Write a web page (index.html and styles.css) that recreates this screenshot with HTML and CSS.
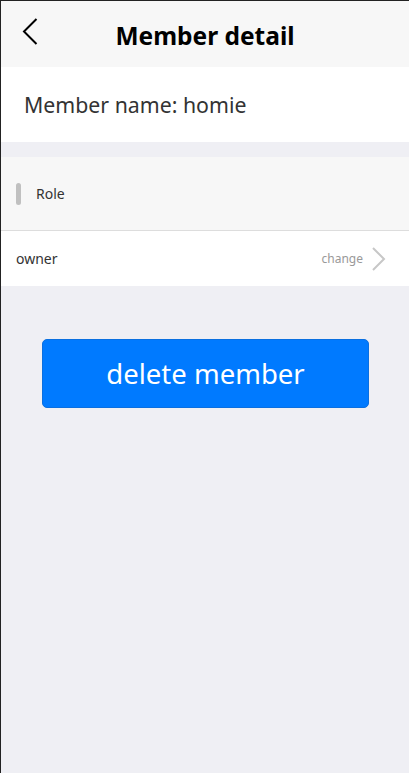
FILE: index.html
```html
<!DOCTYPE html>
<html lang="en">
<head>
<meta charset="utf-8">
<title>Member detail</title>
<link rel="stylesheet" href="styles.css">
</head>
<body>
<div class="page">
  <header class="nav">
    <button class="back" aria-label="Back">
      <svg width="16" height="27" viewBox="0 0 16 27"><path d="M14.5 1 L2 13.5 L14.5 26" fill="none" stroke="#000" stroke-width="2"/></svg>
    </button>
    <h1 class="title">Member detail</h1>
  </header>
  <section class="name-row">Member name: homie</section>
  <section class="group">
    <div class="group-head"><span class="bar"></span><span class="group-title">Role</span></div>
    <div class="item">
      <span class="item-label">owner</span>
      <span class="item-action">change
        <svg width="16" height="24" viewBox="0 0 16 24"><path d="M2 1 L13 12 L2 23" fill="none" stroke="#c7c7c7" stroke-width="2"/></svg>
      </span>
    </div>
  </section>
  <div class="actions">
    <button class="danger">delete member</button>
  </div>
</div>
</body>
</html>
```
FILE: styles.css
```css
* { box-sizing: border-box; }
html, body { margin: 0; padding: 0; height: 100%; }
body {
  font-family: "Noto Sans", "Open Sans", sans-serif;
  background: #efeff4;
  border-top: 1px solid #222;
  border-left: 1px solid #222;
}
.page { min-height: 100%; background: #efeff4; }
.nav {
  height: 66px;
  background: #f7f7f7;
  display: flex;
  align-items: center;
  justify-content: center;
  position: relative;
}
.back {
  position: absolute;
  left: 21px;
  top: 17px;
  border: 0;
  background: none;
  padding: 0;
  display: flex;
}
.title {
  margin: 0;
  font-size: 24.5px;
  font-weight: 700;
  color: #000;
  padding-top: 2px;
}
.name-row {
  height: 75px;
  background: #fff;
  display: flex;
  align-items: center;
  padding-left: 23px;
  font-size: 21.3px;
  color: #333;
  margin-bottom: 15px;
}
.group { background: #fff; }
.group-head {
  height: 74px;
  background: #f7f7f7;
  display: flex;
  align-items: center;
  padding-left: 15px;
  border-bottom: 1px solid #ddd;
}
.bar {
  width: 5px;
  height: 22px;
  border-radius: 3px;
  background: #c0c0c0;
  margin-right: 15px;
}
.group-title { font-size: 14px; color: #333; }
.item {
  height: 55px;
  display: flex;
  align-items: center;
  justify-content: space-between;
  padding: 0 22px 0 15px;
}
.item-label { font-size: 14px; color: #333; }
.item-action {
  display: flex;
  align-items: center;
  gap: 8px;
  font-size: 12px;
  color: #999;
}
.actions {
  padding: 53px 40px 0 41px;
}
.danger {
  width: 100%;
  height: 69px;
  border: 1px solid #0a6fe0;
  border-radius: 5px;
  background: #007aff;
  color: #fff;
  font-family: "Noto Sans", "Open Sans", sans-serif;
  font-size: 27.5px;
}
```
